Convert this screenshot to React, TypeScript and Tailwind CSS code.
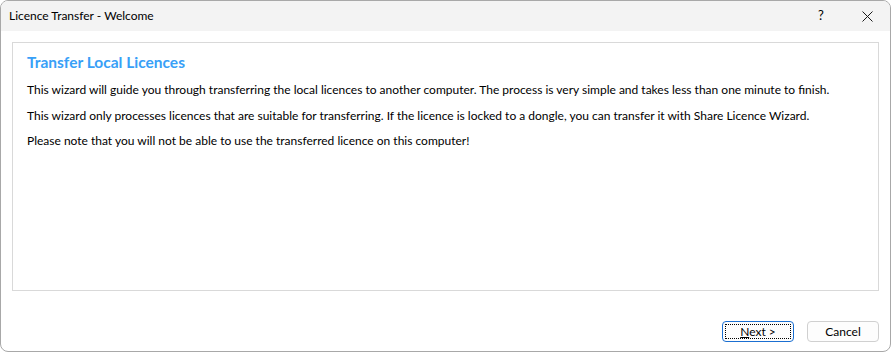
import React from "react";

const font = { fontFamily: "Lato, 'Noto Sans', sans-serif" };

export default function App() {
  return (
    <div className="h-[353px] w-[892px] bg-white" style={font}>
      <div className="flex h-[352px] w-[891px] flex-col overflow-hidden rounded-[8px] border border-[#a8a8a8] bg-white">
        {/* Title bar */}
        <div className="flex h-[30px] shrink-0 items-center bg-[#f3f3f3] pl-[8px] text-[12px] text-black">
          <span>Licence Transfer - Welcome</span>
          <div className="ml-auto flex h-full items-center">
            <span className="w-[46px] text-center text-[13px]">?</span>
            <span className="flex w-[46px] items-center justify-center">
              <svg width="11" height="11" viewBox="0 0 11 11">
                <path d="M0.5 0.5 L10.5 10.5 M10.5 0.5 L0.5 10.5" stroke="#1a1a1a" strokeWidth="1" />
              </svg>
            </span>
          </div>
        </div>

        {/* Body */}
        <div className="px-[11px] pt-[11px]">
          <div className="h-[249px] border border-[#d9d9d9] px-[14px] pt-[9px] text-[12px] text-black">
            <h1 className="text-[15.5px] leading-[20px] font-bold text-[#38a0f7]">Transfer Local Licences</h1>
            <div className="mt-[5px] leading-[25.5px]">
              <p>This wizard will guide you through transferring the local licences to another computer. The process is very simple and takes less than one minute to finish.</p>
              <p>This wizard only processes licences that are suitable for transferring. If the licence is locked to a dongle, you can transfer it with Share Licence Wizard.</p>
              <p>Please note that you will not be able to use the transferred licence on this computer!</p>
            </div>
          </div>
        </div>

        {/* Footer */}
        <div className="flex justify-end gap-[13px] pr-[11px] pt-[30px] text-[12px] text-black">
          <button className="flex h-[21px] w-[72px] items-center justify-center rounded-[4px] border border-[#1b6fd1] bg-[#fdfdfd] p-[2px]">
            <span className="flex h-full w-full items-center justify-center border border-dotted border-black">
              <span><span className="underline">N</span>ext &gt;</span>
            </span>
          </button>
          <button className="flex h-[21px] w-[72px] items-center justify-center rounded-[4px] border border-[#d0d0d0] bg-[#fdfdfd]">
            Cancel
          </button>
        </div>
      </div>
    </div>
  );
}
